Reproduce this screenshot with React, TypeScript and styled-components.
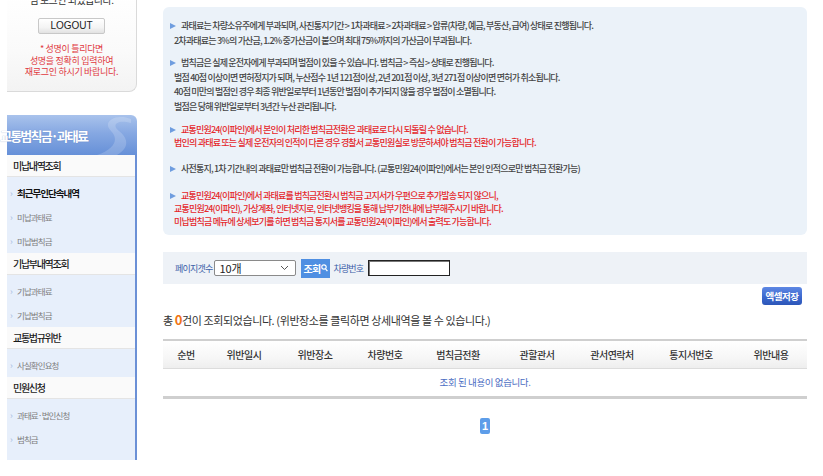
import React from 'react'
import styled, { createGlobalStyle } from 'styled-components'

const GlobalStyle = createGlobalStyle`
  body {
    margin: 0;
    background: #fff;
    color: #333;
    font-family: "Noto Sans CJK KR", "Noto Sans", sans-serif;
  }
  * { box-sizing: border-box; }
`

type SubItem = { label: string, strong?: boolean }
type Section = { title: string, items: SubItem[] }

const sections: Section[] = [
    { title: '미납내역조회', items: [{ label: '최근무인단속내역', strong: true }, { label: '미납과태료' }, { label: '미납범칙금' }] },
    { title: '기납부내역조회', items: [{ label: '기납과태료' }, { label: '기납범칙금' }] },
    { title: '교통법규위반', items: [{ label: '사실확인요청' }] },
    { title: '민원신청', items: [{ label: '과태료·법인신청' }, { label: '범칙금' }] },
]

const columns = [
    { label: '순번', width: 46 },
    { label: '위반일시', width: 70 },
    { label: '위반장소', width: 72 },
    { label: '차량번호', width: 68 },
    { label: '범칙금전환', width: 78 },
    { label: '관할관서', width: 80 },
    { label: '관서연락처', width: 70 },
    { label: '통지서번호', width: 88 },
    { label: '위반내용', width: 72 },
]

export default function App() {
    return (
        <>
            <GlobalStyle />
            <Page>
                <Side>
                    <LoginBox>
                        <Welcome>님 로그인 되었습니다.</Welcome>
                        <LogoutButton>LOGOUT</LogoutButton>
                        <LoginNotice>
                            * 성명이 틀리다면<br />
                            성명을 정확히 입력하여<br />
                            재로그인 하시기 바랍니다.
                        </LoginNotice>
                    </LoginBox>
                    <MenuHead>
                        <span>교통범칙금·과태료</span>
                        <svg width="48" height="40" viewBox="0 0 48 40">
                            <path d="M44 4 C30 -2 14 6 24 16 C32 24 28 34 10 40 L30 40 C44 32 40 22 32 16 C24 10 30 4 44 8 Z" fill="#ffffff" opacity="0.18" />
                        </svg>
                    </MenuHead>
                    <MenuBody>
                        {sections.map((s, i) => (
                            <div key={s.title}>
                                <TopItem>{s.title}</TopItem>
                                <SubList $last={i === sections.length - 1}>
                                    {s.items.map(it => (
                                        <SubEntry key={it.label} $strong={it.strong}>
                                            <Chevron>›</Chevron>{it.label}
                                        </SubEntry>
                                    ))}
                                </SubList>
                            </div>
                        ))}
                    </MenuBody>
                </Side>

                <Main>
                    <NoticeBox>
                        <Para>
                            <Bullet />과태료는 차량소유주에게 부과되며, 사진통지기간 &gt; 1차과태료 &gt; 2차과태료 &gt; 압류(차량, 예금, 부동산, 급여) 상태로 진행됩니다.<br />
                            2차과태료는 3%의 가산금, 1.2% 중가산금이 붙으며 최대 75%까지의 가산금이 부과됩니다.
                        </Para>
                        <Para $gap={8}>
                            <Bullet />범칙금은 실제 운전자에게 부과되며 벌점이 있을 수 있습니다. 범칙금 &gt; 즉심 &gt; 상태로 진행됩니다.<br />
                            벌점 40점 이상이면 면허정지가 되며, 누산점수 1년 121점이상, 2년 201점 이상, 3년 271점 이상이면 면허가 취소됩니다.<br />
                            40점 미만의 벌점인 경우 최종 위반일로부터 1년동안 벌점이 추가되지 않을 경우 벌점이 소멸됩니다.<br />
                            벌점은 당해 위반일로부터 3년간 누산 관리됩니다.
                        </Para>
                        <Para $red $gap={9}>
                            <Bullet />교통민원24(이파인)에서 본인이 처리한 범칙금전환은 과태료로 다시 되돌릴 수 없습니다.<br />
                            법인의 과태료 또는 실제 운전자의 인적이 다른 경우 경찰서 교통민원실로 방문하셔야 범칙금 전환이 가능합니다.
                        </Para>
                        <Para $gap={13}>
                            <Bullet />사전통지, 1차 기간내의 과태료만 범칙금 전환이 가능합니다. (교통민원24(이파인)에서는 본인 인적으로만 범칙금 전환가능)
                        </Para>
                        <Para $red $gap={12}>
                            <Bullet />교통민원24(이파인)에서 과태료를 범칙금전환시 범칙금 고지서가 우편으로 추가발송 되지 않으니,<br />
                            교통민원24(이파인), 가상계좌, 인터넷지로, 인터넷뱅킹을 통해 납부기한내에 납부해주시기 바랍니다.<br />
                            미납범칙금 메뉴에 상세보기를 하면 범칙금 통지서를 교통민원24(이파인)에서 출력도 가능합니다.
                        </Para>
                    </NoticeBox>

                    <SearchBar>
                        <FieldLabel>페이지갯수</FieldLabel>
                        <SelectBox>
                            <span>10개</span>
                            <svg width="9" height="6" viewBox="0 0 9 6">
                                <path d="M1 1 L4.5 4.5 L8 1" fill="none" stroke="#555" strokeWidth="1" />
                            </svg>
                        </SelectBox>
                        <SearchButton>
                            조회
                            <svg width="7" height="8" viewBox="0 0 7 8">
                                <circle cx="3" cy="3" r="2.2" fill="none" stroke="#fff" strokeWidth="1.2" />
                                <path d="M4.6 4.8 L6.4 7.2" stroke="#fff" strokeWidth="1.3" />
                            </svg>
                        </SearchButton>
                        <FieldLabel $gap={3}>차량번호</FieldLabel>
                        <CarInput />
                    </SearchBar>

                    <ActionRow>
                        <ExcelButton>엑셀저장</ExcelButton>
                    </ActionRow>

                    <Summary>
                        총 <Count>0</Count>건이 조회되었습니다. (위반장소를 클릭하면 상세내역을 볼 수 있습니다.)
                    </Summary>

                    <ResultTable>
                        <colgroup>
                            {columns.map(c => <col key={c.label} style={{ width: c.width }} />)}
                        </colgroup>
                        <thead>
                            <tr>
                                {columns.map(c => <HeadCell key={c.label}>{c.label}</HeadCell>)}
                            </tr>
                        </thead>
                        <tbody>
                            <tr>
                                <EmptyCell colSpan={9}>조회 된 내용이 없습니다.</EmptyCell>
                            </tr>
                        </tbody>
                    </ResultTable>

                    <Pager>
                        <PageNum>1</PageNum>
                    </Pager>
                </Main>
            </Page>
        </>
    )
}

const Page = styled.div`
    display: flex;
    align-items: flex-start;
    height: 476px;
    overflow: hidden;
`

const Side = styled.div`
    flex-shrink: 0;
    width: 137px;
    padding-left: 7px;
`

const LoginBox = styled.div`
    display: flex;
    flex-direction: column;
    align-items: center;
    height: 100px;
    margin-top: -8px;
    padding-top: 5px;
    border-right: 1px solid #dadada;
    border-bottom: 1px solid #dadada;
    border-bottom-right-radius: 8px;
    background: linear-gradient(180deg, #ffffff 0%, #fafafa 60%, #f3f3f3 100%);
`

const Welcome = styled.div`
    margin-top: -3px;
    height: 12px;
    font-size: 10px;
    line-height: 12px;
    color: #333;
    letter-spacing: -0.5px;
`

const LogoutButton = styled.div`
    width: 67px;
    height: 16px;
    margin-top: 12px;
    border: 1px solid #c8c8c8;
    border-radius: 2px;
    background: linear-gradient(180deg, #ffffff 0%, #f4f4f4 60%, #e2e2e2 100%);
    font-family: "Liberation Sans", Arial, sans-serif;
    font-size: 10px;
    line-height: 14px;
    text-align: center;
    color: #222;
`

const LoginNotice = styled.div`
    margin-top: 9px;
    font-size: 9px;
    line-height: 11.5px;
    letter-spacing: -0.3px;
    text-align: center;
    color: #e0383e;
`

const MenuHead = styled.div`
    position: relative;
    display: flex;
    align-items: center;
    height: 40px;
    margin-top: 23px;
    border-top-right-radius: 6px;
    background: linear-gradient(180deg, #a9c3ec 0%, #86a8e2 45%, #6690d8 100%);

    span {
        margin-left: -7px;
        font-size: 13px;
        font-weight: 700;
        letter-spacing: -1.8px;
        color: #fff;
        text-shadow: 0 0 1px rgba(40, 70, 140, 0.4);
    }

    svg {
        position: absolute;
        right: 2px;
        top: 0;
    }
`

const MenuBody = styled.div`
    border-right: 2px solid #6b90d6;
`

const TopItem = styled.div`
    height: 22px;
    padding-left: 6px;
    line-height: 21px;
    font-size: 10px;
    font-weight: 500;
    letter-spacing: -1.3px;
    color: #1a1a1a;
    background: #fafafa;
    border-bottom: 1px solid #e4e4e4;
`

const SubList = styled.div<{ $last?: boolean }>`
    padding: 4px 0 ${p => (p.$last ? '9px' : '0')};
    background: #e7effb;
`

const SubEntry = styled.div<{ $strong?: boolean }>`
    display: flex;
    align-items: center;
    height: 24px;
    padding-left: 3px;
    font-size: ${p => (p.$strong ? '9.5px' : '8.5px')};
    font-weight: ${p => (p.$strong ? 700 : 400)};
    letter-spacing: ${p => (p.$strong ? '-1px' : '-0.9px')};
    color: ${p => (p.$strong ? '#111' : '#7d7d7d')};
`

const Chevron = styled.span`
    width: 7px;
    font-size: 9px;
    font-weight: 400;
    color: #a3bbe0;
`

const Main = styled.div`
    flex-shrink: 0;
    width: 644px;
    margin-left: 26px;
    padding-top: 7px;
`

const NoticeBox = styled.div`
    height: 228px;
    padding: 12px 0 0 3px;
    border-radius: 6px;
    background: #ebf2f9;
`

const Para = styled.p<{ $red?: boolean, $gap?: number }>`
    margin: ${p => p.$gap ?? 0}px 0 0;
    padding-left: 8px;
    text-indent: -4px;
    font-size: 9px;
    font-weight: 500;
    line-height: ${p => (p.$red ? '13px' : '14.5px')};
    letter-spacing: -0.8px;
    color: ${p => (p.$red ? '#e5282c' : '#454545')};
`

const Bullet = styled.span`
    display: inline-block;
    width: 0;
    height: 0;
    margin-right: 5px;
    border-left: 6px solid #6f9ddf;
    border-top: 3.5px solid transparent;
    border-bottom: 3.5px solid transparent;
    vertical-align: 0;
`

const SearchBar = styled.div`
    display: flex;
    align-items: center;
    height: 32px;
    margin-top: 17px;
    padding-left: 12px;
    background: #eef2f7;
`

const FieldLabel = styled.span<{ $gap?: number }>`
    margin-left: ${p => p.$gap ?? 0}px;
    font-size: 9px;
    letter-spacing: -0.8px;
    color: #3c5ea8;
`

const SelectBox = styled.div`
    display: flex;
    align-items: center;
    justify-content: space-between;
    width: 82px;
    height: 16px;
    margin-left: 2px;
    padding: 0 6px 0 4px;
    border: 1px solid #8a8a8a;
    border-radius: 2px;
    background: #fff;
    font-size: 11px;
    color: #222;
`

const SearchButton = styled.div`
    display: flex;
    align-items: center;
    justify-content: center;
    gap: 1px;
    width: 29px;
    height: 19px;
    margin-left: 5px;
    background: #4f8fe2;
    font-size: 10px;
    font-weight: 700;
    letter-spacing: -0.8px;
    color: #fff;
`

const CarInput = styled.input`
    width: 82px;
    height: 16px;
    margin-left: 5px;
    border: 1px solid #222;
    box-shadow: inset 1px 1px 0 #777;
    background: #fff;
    outline: none;
`

const ActionRow = styled.div`
    display: flex;
    justify-content: flex-end;
    margin-top: 3px;
    padding-right: 5px;
`

const ExcelButton = styled.div`
    width: 40px;
    height: 18px;
    border-radius: 3px;
    background: linear-gradient(180deg, #5e88e4 0%, #3a66cc 60%, #2c56b8 100%);
    font-size: 9.5px;
    font-weight: 700;
    line-height: 18px;
    text-align: center;
    letter-spacing: -0.5px;
    color: #fff;
`

const Summary = styled.div`
    margin-top: 8px;
    font-size: 11px;
    line-height: 14px;
    letter-spacing: -0.4px;
    color: #333;
`

const Count = styled.b`
    font-size: 13px;
    color: #f07414;
`

const ResultTable = styled.table`
    width: 644px;
    margin-top: 12px;
    border-collapse: collapse;
    table-layout: fixed;
    border-top: 2px solid #cfcfcf;
    border-bottom: 3px solid #cfcfcf;
`

const HeadCell = styled.th`
    height: 28px;
    padding: 0;
    border-bottom: 1px solid #dcdcdc;
    background: linear-gradient(180deg, #ffffff 0%, #f7f7f7 60%, #eeeeee 100%);
    font-size: 10px;
    font-weight: 500;
    letter-spacing: -0.5px;
    color: #333;
`

const EmptyCell = styled.td`
    height: 29px;
    padding: 0;
    text-align: center;
    font-size: 9.5px;
    letter-spacing: -0.4px;
    color: #4a6cc2;
`

const Pager = styled.div`
    display: flex;
    justify-content: center;
    margin-top: 19px;
`

const PageNum = styled.span`
    width: 10px;
    height: 16px;
    border-radius: 2px;
    background: #5d9de9;
    font-family: "Liberation Sans", Arial, sans-serif;
    font-size: 11px;
    font-weight: 700;
    line-height: 16px;
    text-align: center;
    color: #fff;
`
